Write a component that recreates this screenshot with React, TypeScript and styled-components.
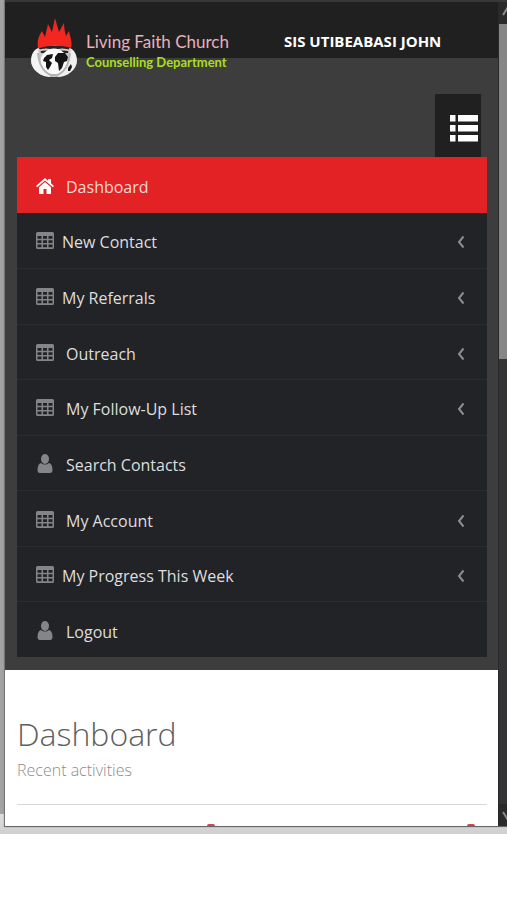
import React from "react";
import styled, { createGlobalStyle } from "styled-components";

const GlobalStyle = createGlobalStyle`
  * { box-sizing: border-box; }
  body {
    margin: 0;
    background: #fff;
    font-family: "Open Sans", "Noto Sans", sans-serif;
  }
`;

const Desktop = styled.div`
  padding: 0 0 7px 5px;
  background: linear-gradient(to top, #cfcfcf 0, #dedede 20px, #a3a3a3 20px);
`;

const Window = styled.div`
  display: flex;
  border-top: 2px solid #383838;
  border-bottom: 1px solid #666;
  box-shadow: -1px 0 1px #777;
`;

const Page = styled.div`
  flex: 1;
  min-width: 0;
  background: #3d3d3d;
`;

const Header = styled.header`
  display: flex;
  align-items: flex-start;
  height: 56px;
  padding: 13px 24px 0;
  background: #202020;
`;

const Brand = styled.a`
  display: flex;
  gap: 7px;
  text-decoration: none;
`;

const BrandText = styled.span`
  display: flex;
  flex-direction: column;
  padding-top: 16px;
  font-family: Lato, sans-serif;
  white-space: nowrap;
`;

const BrandName = styled.span`
  color: #e6b0bd;
  font-size: 17px;
  line-height: 22px;
`;

const BrandUnit = styled.span`
  color: #a9df1c;
  font-size: 13px;
  font-weight: 700;
  line-height: 18px;
`;

const UserName = styled.strong`
  margin-left: 55px;
  color: #fff;
  font-size: 15px;
  font-weight: 700;
  line-height: 24px;
  padding-top: 14px;
  white-space: nowrap;
`;

const Sidebar = styled.div`
  padding: 36px 11px 13px 12px;
`;

const Toggle = styled.button`
  display: flex;
  align-items: center;
  justify-content: flex-end;
  width: 46px;
  height: 63px;
  margin: 0 6px 0 auto;
  padding: 6px 3px 0;
  border: 0;
  background: #202020;
  color: #fff;
`;

const Menu = styled.ul`
  display: grid;
  grid-auto-rows: 1fr;
  min-height: 500px;
  margin: 0;
  padding: 0;
  list-style: none;
  background: #222327;
`;

const MenuItem = styled.li`
  display: flex;
  & + & + & {
    border-top: 1px solid #2b2c30;
  }
`;

const MenuLink = styled.a<{ $active?: boolean; $tight?: boolean }>`
  flex: 1;
  display: flex;
  align-items: center;
  gap: ${(p) => (p.$tight ? 8 : 12)}px;
  padding: 4px 22px 0 19px;
  background: ${(p) => (p.$active ? "#e22224" : "transparent")};
  color: ${(p) => (p.$active ? "#ffd9d6" : "#dedede")};
  font-size: 16px;
  line-height: 24px;
  text-decoration: none;
  white-space: nowrap;
`;

const MenuIcon = styled.svg<{ $active?: boolean }>`
  flex: none;
  width: 18px;
  height: 20px;
  margin-bottom: 2px;
  color: ${(p) => (p.$active ? "#fff" : "#858587")};
`;

const Chevron = styled.svg`
  width: 8px;
  height: 14px;
  margin-left: auto;
  color: #8d8d8f;
`;

const Main = styled.main`
  padding: 42px 11px 0 12px;
  background: #fff;
`;

const Title = styled.h1`
  margin: 0;
  color: #606060;
  font-size: 32px;
  font-weight: 300;
  line-height: 44px;
`;

const Subtitle = styled.p`
  margin: 0;
  color: #8c8c8c;
  font-size: 16px;
  font-weight: 300;
  line-height: 28px;
`;

const Rule = styled.hr`
  height: 1px;
  margin: 20px 0 19px;
  border: 0;
  background: #d8d8d8;
`;

const Markers = styled.div`
  display: grid;
  grid-template-columns: 198px 1fr;
  justify-items: end;
  padding-right: 12px;
`;

const Marker = styled.span`
  width: 8px;
  height: 2px;
  border-radius: 4px 4px 0 0;
  background: #c94a45;
`;

const Scrollbar = styled.div`
  display: flex;
  flex-direction: column;
  width: 9px;
  background: #343436;
  border-left: 1px solid #29292a;
`;

const ScrollEnd = styled.span`
  height: 22px;
  overflow: hidden;
  background: #2a2a2b;
  color: #8a8a8a;
`;

const Track = styled.span`
  flex: 1;
`;

const Thumb = styled.span`
  display: block;
  height: 43%;
  background: #868687;
`;

function Emblem() {
  return (
    <svg width="50" height="64" viewBox="0 0 50 64" aria-hidden="true">
      <ellipse cx="25" cy="46" rx="23" ry="16" fill="#c8c8c8" />
      <path d="M10 33C1 35-1 50 8 57c4 4 10 5 14 5-10-7-14-17-12-29z" fill="#f4f4f4" />
      <path d="M40 33c9 2 11 17 2 24-4 4-10 5-14 5 10-7 14-17 12-29z" fill="#efefef" />
      <path d="M10 31h31l-2 7H12z" fill="#242424" />
      <path d="M9 36q8-3 16 0 8-3 17 0" fill="none" stroke="#cfcfcf" strokeWidth="2" />
      <circle cx="25" cy="47" r="13.500" fill="#fafafa" />
      <path d="M15 43l3-3 6-1-1 4-3 2 3 3-2 4-2 3-2-3v-5l-3-1zM26 42l3-4h7l3 4-1 4-3 1-2 6-3 3-1-8-3-2z" fill="#151515" />
      <path d="M39 53l3-4 1 3-2 4h-2z" fill="#151515" />
      <path d="M9 38c1 11 5 19 13 22h6c8-3 12-11 13-22" fill="none" stroke="#b5b5b5" strokeWidth="2" />
      <path d="M9 33C8 27 9 22 13 16l3 6 3-13 0 0 4 8 3-14 4 14 5-9c0 5 1 9 2 13l3-5c1 6 4 12 2 17-8-3-23-3-31 0z" fill="#f32620" />
    </svg>
  );
}

type IconName = "home" | "table" | "user";

function ItemIcon({ name, active }: { name: IconName; active?: boolean }) {
  return (
    <MenuIcon viewBox="0 0 18 20" $active={active} aria-hidden="true">
      {name === "home" && (
        <g fill="currentColor">
          <path d="M0 10L9 2l3 2.700V3h3v4.200l3 2.800-1.200 1.300L9 4.600l-7.800 6.700z" />
          <path d="M3 11.300L9 6l6 5.300V18h-4.500v-5h-3v5H3z" />
        </g>
      )}
      {name === "table" && (
        <path
          fill="currentColor"
          fillRule="evenodd"
          d="M1.500 1h15Q18 1 18 2.500v14q0 1.500-1.500 1.500h-15Q0 18 0 16.500v-14Q0 1 1.500 1zM1.500 5v2.700h4V5zm5.500 0v2.700h4V5zm5.500 0v2.700h4V5zM1.500 9.300v2.700h4v-2.700zm5.500 0v2.700h4v-2.700zm5.500 0v2.700h4v-2.700zM1.500 13.600v2.700h4v-2.700zm5.500 0v2.700h4v-2.700zm5.500 0v2.700h4v-2.700z"
        />
      )}
      {name === "user" && (
        <g fill="currentColor">
          <ellipse cx="9" cy="5" rx="4" ry="5" />
          <path d="M5 9q4 3 8 0 3.500 1 3.500 7 0 3-2.500 3H4q-2.500 0-2.500-3 0-6 3.500-7z" />
        </g>
      )}
    </MenuIcon>
  );
}

type Entry = { label: string; icon: IconName; active?: boolean; tight?: boolean; sub?: boolean };

const entries: Entry[] = [
  { label: "Dashboard", icon: "home", active: true },
  { label: "New Contact", icon: "table", tight: true, sub: true },
  { label: "My Referrals", icon: "table", tight: true, sub: true },
  { label: "Outreach", icon: "table", sub: true },
  { label: "My Follow-Up List", icon: "table", sub: true },
  { label: "Search Contacts", icon: "user" },
  { label: "My Account", icon: "table", sub: true },
  { label: "My Progress This Week", icon: "table", tight: true, sub: true },
  { label: "Logout", icon: "user" },
];

export default function App() {
  return (
    <>
      <GlobalStyle />
      <Desktop>
        <Window>
          <Page>
            <Header>
              <Brand href="#">
                <Emblem />
                <BrandText>
                  <BrandName>Living Faith Church</BrandName>
                  <BrandUnit>Counselling Department</BrandUnit>
                </BrandText>
              </Brand>
              <UserName>SIS UTIBEABASI JOHN</UserName>
            </Header>
            <Sidebar>
              <Toggle type="button" aria-label="Toggle menu">
                <svg width="28" height="27" viewBox="0 0 28 27" fill="currentColor" aria-hidden="true">
                  <path d="M0 0h5.500v6.500H0zM8 0h20v6.500H8zM0 10h5.500v6.500H0zM8 10h20v6.500H8zM0 20h5.500v6.500H0zM8 20h20v6.500H8z" />
                </svg>
              </Toggle>
              <nav>
                <Menu>
                  {entries.map((e) => (
                    <MenuItem key={e.label}>
                      <MenuLink href="#" $active={e.active} $tight={e.tight}>
                        <ItemIcon name={e.icon} active={e.active} />
                        {e.label}
                        {e.sub && (
                          <Chevron viewBox="0 0 8 14" aria-hidden="true">
                            <path d="M6.500 1.500L2 7l4.500 5.500" fill="none" stroke="currentColor" strokeWidth="2" />
                          </Chevron>
                        )}
                      </MenuLink>
                    </MenuItem>
                  ))}
                </Menu>
              </nav>
            </Sidebar>
            <Main>
              <Title>Dashboard</Title>
              <Subtitle>Recent activities</Subtitle>
              <Rule />
              <Markers>
                <Marker />
                <Marker />
              </Markers>
            </Main>
          </Page>
          <Scrollbar aria-hidden="true">
            <ScrollEnd>
              <svg width="12" height="22" viewBox="0 0 12 22">
                <path d="M4 13l5-8" stroke="currentColor" strokeWidth="2" />
              </svg>
            </ScrollEnd>
            <Track>
              <Thumb />
            </Track>
            <ScrollEnd>
              <svg width="12" height="22" viewBox="0 0 12 22">
                <path d="M4 8l5 8" stroke="currentColor" strokeWidth="2" />
              </svg>
            </ScrollEnd>
          </Scrollbar>
        </Window>
      </Desktop>
    </>
  );
}
